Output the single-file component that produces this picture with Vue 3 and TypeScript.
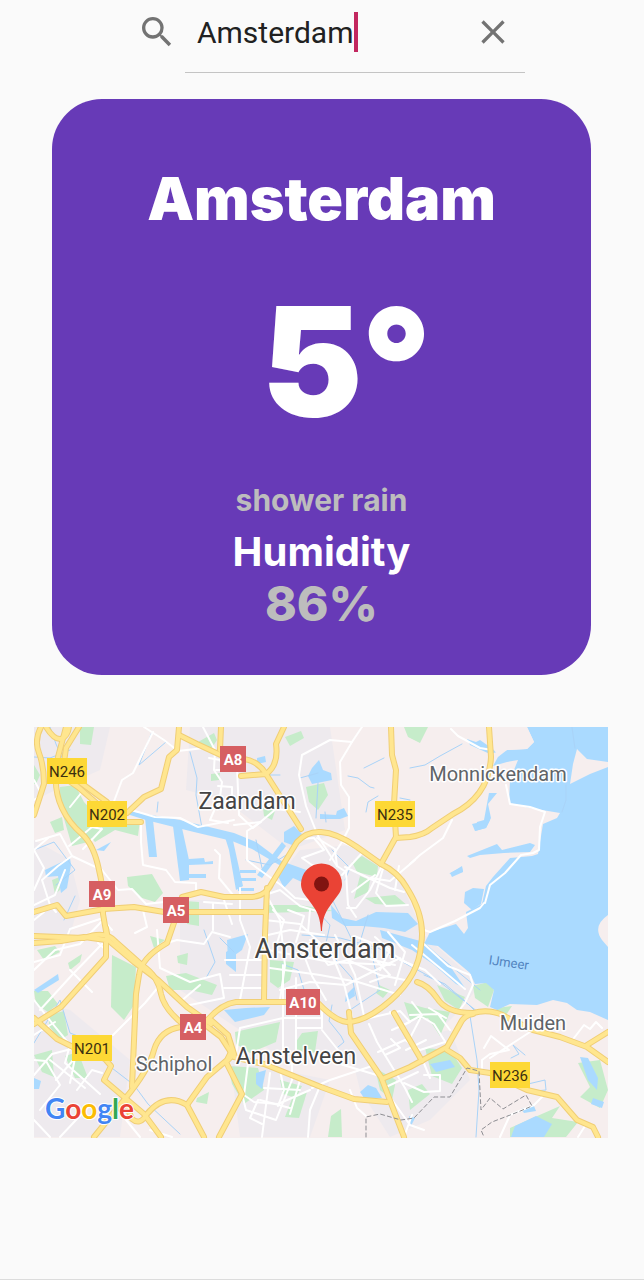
<script setup lang="ts">
import { ref } from 'vue'

interface Shield {
  code: string
  x: number
  y: number
  w: number
  kind: 'national' | 'motorway'
}

interface Place {
  name: string
  x: number
  y: number
  size: 'lg' | 'md' | 'sm'
}

const query = ref('Amsterdam')
const weather = {
  city: 'Amsterdam',
  temperature: 5,
  description: 'shower rain',
  humidity: 86,
}

function clearQuery(): void {
  query.value = ''
}

const shields: Shield[] = [
  { code: 'N246', x: 67, y: 771, w: 40, kind: 'national' },
  { code: 'N202', x: 107, y: 814, w: 40, kind: 'national' },
  { code: 'N235', x: 395, y: 814, w: 40, kind: 'national' },
  { code: 'N201', x: 92, y: 1048, w: 40, kind: 'national' },
  { code: 'N236', x: 510, y: 1075, w: 40, kind: 'national' },
  { code: 'A8', x: 233, y: 759, w: 26, kind: 'motorway' },
  { code: 'A9', x: 102, y: 894, w: 26, kind: 'motorway' },
  { code: 'A5', x: 176, y: 910, w: 26, kind: 'motorway' },
  { code: 'A10', x: 303, y: 1002, w: 34, kind: 'motorway' },
  { code: 'A4', x: 193, y: 1027, w: 26, kind: 'motorway' },
]

const places: Place[] = [
  { name: 'Amsterdam', x: 325, y: 958, size: 'lg' },
  { name: 'Zaandam', x: 247, y: 809, size: 'md' },
  { name: 'Amstelveen', x: 296, y: 1064, size: 'md' },
  { name: 'Monnickendam', x: 498, y: 781, size: 'sm' },
  { name: 'Muiden', x: 533, y: 1030, size: 'sm' },
  { name: 'Schiphol', x: 174, y: 1071, size: 'sm' },
]

const urban: string[] = [
  'M34 727H110L100 770L34 800Z',
  'M190 727H330L345 830L290 850L225 800L186 790Z',
  'M34 840L70 860L80 900L70 935L34 950Z',
  'M180 900H260L300 850L350 845L400 880L424 935L480 985L460 1010L420 1050L400 1090L340 1050L270 1050L180 990Z',
  'M34 1000L70 1010L130 1060L120 1137H34Z',
  'M230 1060L330 1080L310 1137H240Z',
  'M350 1050L450 1030L470 1080L430 1120L390 1137L360 1090Z',
]

const parks: string[] = [
  'M80 727H94L91 745L80 744Z',
  'M60 787L75 785L84 802L104 824L88 842L72 846L60 805Z',
  'M88 834L105 826L140 820L138 836L115 830L95 842Z',
  'M34 765L40 775L36 784H34Z',
  'M50 822L62 817L64 830L55 833Z',
  'M127 877L152 874L163 893L155 902L142 898L128 886Z',
  'M52 880L62 876L60 890L55 894Z',
  'M198 742L214 733L217 740L210 751L198 747Z',
  'M211 774L220 773L219 780L211 781Z',
  'M285 737L301 731L304 738L290 746Z',
  'M306 787L324 783L328 795L318 810L309 802Z',
  'M263 808L276 808L272 820L264 816Z',
  'M404 727H428L420 743L408 737Z',
  'M352 862L362 856L378 866L377 877L357 872Z',
  'M360 876L370 880L368 892L354 899Z',
  'M365 898L395 895L408 906L375 904Z',
  'M268 905L300 905L335 911L300 912L264 913Z',
  'M185 901L199 902L199 926L187 924Z',
  'M270 960L294 962L290 980L278 988L270 982Z',
  'M379 985L390 990L383 998L376 993Z',
  'M112 955L136 967L134 1005L124 1020L111 1007Z',
  'M150 936L165 940L154 948Z',
  'M177 956L188 953L187 965L178 963Z',
  'M166 976L186 973L217 985L212 995L190 990L170 990Z',
  'M37 950L55 946L60 952L44 960Z',
  'M68 963L82 954L80 962L70 970Z',
  'M34 991L48 991L58 1004L48 1012L36 1004Z',
  'M49 1015L64 1011L68 1035L60 1040L49 1026Z',
  'M34 1055L52 1050L54 1077L42 1072Z',
  'M65 1056L78 1052L88 1078L75 1078Z',
  'M235 1032L280 1022L276 1042L250 1053L236 1044Z',
  'M302 1033L318 1031L315 1052L297 1060L295 1043Z',
  'M228 1066L258 1068L264 1090L244 1104L232 1084Z',
  'M280 1080L302 1086L296 1098L283 1094Z',
  'M293 1096L307 1092L299 1118L285 1117Z',
  'M331 1116L341 1109L342 1137H328Z',
  'M197 1098L209 1092L207 1104L196 1102Z',
  'M425 1048L450 1050L462 1068L452 1084L432 1076Z',
  'M408 1090L422 1084L430 1094L410 1110Z',
  'M473 986L488 982L494 990L488 1007L475 998Z',
  'M404 1002L425 1008L450 1012L440 1036L428 1018L410 1020Z',
  'M437 985L465 997L459 1010L445 1001Z',
  'M497 1008L512 1006L506 1015L497 1014Z',
  'M578 1063L600 1060L608 1090L600 1108L580 1097L590 1087Z',
  'M375 1068L396 1080L392 1100L380 1090Z',
  'M510 1128L560 1106L552 1118L578 1122L566 1137H510Z',
]

const lakes: string[] = [
  'M527 727L534 742L527 749L507 750L498 757L493 766L507 762L518 760L510 780L509 803L530 808L560 813L557 818L543 824L538 854L532 856L510 858L493 877L486 886L482 904L466 912L468 928L464 934L456 924L430 932L424 944L438 946L470 973L475 984L486 983L494 990L490 1007L497 1010L510 1004L537 1005L553 1000L567 1003L577 1010L590 1012L608 1020V727Z',
  'M467 739L476 742L480 740L497 752L490 754L470 745Z',
  'M465 892L473 888L484 889L481 904L472 910L464 903Z',
  'M450 873L462 867L463 872L452 877Z',
  'M128 811L180 820L234 833L256 842L280 860L300 870L297 875L274 862L252 849L232 841L194 832L146 820L130 815Z',
  'M145 818L153 820L157 857L149 857Z',
  'M173 826L182 828L189 860V880L180 881Z',
  'M189 859L204 858L205 862L213 861V864L189 865Z',
  'M189 874H206V878H189Z',
  'M224 834L232 836L243 886L236 890L229 850Z',
  'M240 870H256V873H240ZM240 878H256V881H240ZM238 888H254V891H238Z',
  'M284 832L294 826L302 834L292 845L284 842Z',
  'M284 862L312 872L306 884L293 878L284 888L278 876Z',
  'M282 842L286 846L262 878L257 875Z',
  'M312 768L319 760L323 770L331 773L332 780L312 784L308 776Z',
  'M257 758L265 756L266 762L257 764Z',
  'M331 905L342 918L356 921L376 912L408 913L418 924L405 932L384 928L362 926L345 926L332 918Z',
  'M380 930L424 942L450 966L465 988L456 984L433 964L412 950L382 938Z',
  'M45 870L70 858L71 865L67 888L61 893L58 876L46 877Z',
  'M96 850L111 842L104 851Z',
  'M320 814L336 815L337 811L344 808L348 816L340 819H320Z',
  'M477 822L484 820L489 793L497 793L488 804L491 818L486 828L475 831Z',
  'M449 874L462 866L463 872Z',
  'M472 824L490 820L486 828L475 831Z',
  'M467 856L482 850L497 844L502 850L530 843L535 845L530 852L504 853L480 855L470 858Z',
  'M227 940L248 934L242 950L228 960Z',
  'M224 1010L246 1008L270 1007L264 1015L235 1022Z',
  'M256 1073L266 1070L262 1089L256 1084Z',
  'M360 1092L368 1085L376 1088L382 1098L364 1098Z',
  'M430 1064L450 1060L455 1067L436 1072Z',
  'M580 1057L588 1058L598 1078L597 1090L588 1080Z',
  'M515 1126L536 1116L552 1124L544 1137H511Z',
  'M593 1098L604 1102L602 1108L591 1104Z',
  'M226 952L236 946V972L226 964Z',
  'M34 990L58 974L59 980L38 993Z',
  'M346 995L354 987L355 996L345 1002Z',
  'M34 1078L41 1081L39 1089H34Z',
  'M409 1116L415 1118L411 1126Z',
  'M521 1109L534 1106L536 1111L524 1113Z',
]

const streams: string[] = [
  'M34 757L50 758L70 750M50 727L56 744L64 762M152 732L139 765L166 742',
  'M190 752L197 778L196 795L202 828M158 802L157 812',
  'M410 768L425 765L440 756L462 744M348 776L358 778L370 787L374 788M364 768L384 758',
  'M572 727L575 748M566 785V800L562 812',
  'M332 1005L329 1021L341 1036L344 1042L338 1047',
  'M470 1016L477 1060L479 1090L476 1137',
  'M525 1055L513 1045L519 1054L511 1058M528 1084L545 1080L546 1090L534 1091',
  'M34 1043L60 1000L70 1033L88 1040L108 1065L134 1085L148 1104L180 1134',
  'M330 895L340 915L352 940L372 955L380 990L350 1010',
  'M302 935L340 938L378 948L410 966L440 982L478 1012',
  'M318 912L330 925L326 943M368 915L360 942L374 950',
  'M424 975L445 984L466 1002L478 1014M440 957L480 990',
  'M246 860L270 865L296 849M256 840L262 868',
  'M282 964L298 970L306 996M336 960L352 978L357 1000',
  'M204 930L215 962L206 978M220 938L234 952',
  'M34 850L54 842L75 870L56 885M75 896L64 920',
  'M318 783L316 818M300 778L318 773M325 812L326 822M332 850L350 868L345 880',
  'M240 775H280M366 812L368 802L378 796M400 798L410 800',
]

const streets: string[] = [
  'M144 727L164 740L178 751L204 748M153 732L133 773L122 780L113 804',
  'M128 809L155 817L180 818L198 827L234 820',
  'M141 824V842L143 865L166 870L175 882L196 883V893L183 899',
  'M215 850L220 855L219 878L233 895M203 727L215 750L214 770L222 782L220 797L210 820L228 823',
  'M72 856L58 866L42 880L50 905L56 912M36 841L60 834L72 856L102 870L118 890L132 889L146 904L164 902',
  'M83 849L102 829L92 827L74 842L69 846M34 800L42 795L34 780M48 838L34 850L44 868L34 890',
  'M70 807L82 792M34 920L44 912M103 918L70 929L60 955L34 962',
  'M230 764L237 767L239 815L253 828L276 809L300 812',
  'M218 786L232 787V795L224 805M216 770L232 770M209 758L220 760L224 769',
  'M299 775L302 755L330 740L352 742L362 727M299 775L306 806L318 836L337 866L346 872L348 905L356 917',
  'M352 742L340 762L341 785L349 797V828L342 842L330 860',
  'M234 825L261 822L247 831V860L257 868L281 885L295 898L310 900',
  'M301 839L314 838L324 850L302 858L312 865L328 870M317 838L335 849L337 866',
  'M385 860L370 890L356 908L347 908M371 878L390 881L415 860M399 866L395 890M384 865L376 893L386 906L408 905',
  'M343 842L363 852L342 875M345 867L390 888L404 892M352 892L375 875',
  'M410 864L420 855L443 838L452 820M485 903L490 885L505 873L521 855L533 853L539 850L540 827L545 812L530 807L510 804L506 785',
  'M424 930L430 932L455 921L480 908L484 903M451 729L458 736L480 748L492 750',
  'M34 905L55 895L65 870M40 1010L72 975L102 944M70 970L92 992M98 943L106 950',
  'M113 1035L145 1003L160 985M112 930L103 920L80 944L55 950L34 970',
  'M143 910L147 927L135 933M204 902L232 904M213 903V930M224 900L232 924',
  'M157 930L160 968L190 982L220 974L224 998L190 1005M180 1002L200 985M160 945L177 940L204 944L212 932L230 937',
  'M240 888L240 920L250 947L240 1000M225 960H262M230 975H264M224 988H262M265 920L300 924L322 945',
  'M268 898L280 920L285 965L280 1000M268 935L290 930L324 935M268 950L330 962L390 965',
  'M283 965V1055M296 978V1052M284 1018H320M296 1028H322V1010M236 1054L240 1028L283 1018',
  'M270 968L320 975L358 982L400 995M280 990L310 982L346 985L400 958',
  'M302 950L312 976L326 1000M330 950L344 984L352 1016M344 952L355 975L364 1016',
  'M310 940L328 965L360 957L395 965M335 935L348 960L380 975L405 980M362 945L390 975L370 982',
  'M375 937L390 950L380 970M388 932L405 952L395 985M354 936L380 946L412 966',
  'M265 895L280 890L300 906L320 912M273 910L284 920L275 950M288 910L304 916L296 942M310 910L308 932',
  'M400 960L425 970L440 984M424 944L448 966L470 975L473 985L465 1003L458 1012M412 945L440 968L465 989',
  'M369 1024L377 1042L405 1088L412 1102M378 1052L405 1040L420 1050L445 1042M365 1019L400 1011L410 1022L392 1030',
  'M391 1039L400 1048L385 1055M400 1027L420 1016L434 1024L446 1043M412 1002L422 1015L410 1038L423 1061L430 1078',
  'M424 1075L440 1075V1091L424 1092L404 1083M406 1050L426 1040M386 1087L418 1072',
  'M410 1015L438 1014L450 1030M429 1008L446 1018M390 1012L405 1030',
  'M484 1048L491 1036L509 1050L490 1054L482 1060V1068M530 1032L510 1045L490 1058M574 1038L584 1025L590 1029L596 1022L602 1028',
  'M34 1000L52 1023L70 1045L65 1063L90 1085L100 1094M50 1060L85 1088M34 1075L52 1054L75 1048M56 1080L75 1058L70 1083',
  'M34 1035L55 1022M40 1110L60 1085L46 1061L34 1060M77 1090L92 1070L102 1073M34 1120L50 1137',
  'M248 1064L244 1095L254 1102L278 1104L310 1090M270 1073L262 1137M292 1056V1080L276 1120L246 1110L242 1094M300 1080L290 1114',
  'M264 1088L300 1090M260 1100L290 1108M312 1088L330 1080L375 1065M320 1086L310 1110L308 1137',
  'M258 1100L250 1118L262 1124M280 1070L284 1090L278 1106M350 1090L357 1108L366 1116',
  'M404 1137L412 1115M390 1097L410 1125L424 1130M500 1137L510 1115L534 1105L544 1095M578 1137L585 1126',
  'M90 1105L60 1137M118 1110L140 1137M150 1130L172 1137M300 1052L380 1076M322 1030L342 1055',
]

const highways: string[] = [
  'M41 727Q34 740 39 753T44 784L34 815',
  'M46 727Q54 740 61 739Q68 736 69 727',
  'M66 727L58 757Q52 787 62 808Q69 823 82 834Q94 845 99 870Q104 890 103 914L107 937',
  'M79 727L66 748L62 776L78 787L101 807L117 822H141',
  'M77 780L107 802',
  'M179 727L177 750L169 757L161 789L144 797L127 813',
  'M179 735L197 744L225 757',
  'M221 727L220 750',
  'M34 912L57 905L66 916L104 909L134 907L164 912H266',
  'M182 897L201 892L224 897H252Q266 896 272 883L297 842Q307 831 321 832Q337 833 357 847L381 864Q398 872 407 888Q426 918 421 945Q419 975 391 1000Q366 1022 347 1022Q335 1021 317 1002L261 1002H236Q220 1004 204 1024',
  'M34 936L84 938Q106 930 116 942L143 966Q158 976 161 994Q164 1009 184 1025L204 1024L221 1037L234 1057L250 1061L264 1064L321 1087L354 1099L387 1102',
  'M106 928L108 940L134 962L158 980L187 1007L211 1024',
  'M177 914L167 943Q141 958 139 975L136 994L132 1087',
  'M34 943L61 941L84 937L106 940V957L61 1007L34 1024',
  'M34 1018L57 1039L77 1049L105 1059L111 1066L104 1080L144 1114L161 1137',
  'M181 1027Q160 1030 154 1050Q149 1070 124 1100L94 1137',
  'M124 1100L132 1119Q140 1126 147 1114Q165 1092 187 1105L207 1077L227 1060L232 1050',
  'M187 1105L204 1137',
  'M211 1020L228 1035L234 1054L226 1062L242 1094L219 1137',
  'M267 888L265 935L264 1000',
  'M349 1012L351 1033L381 1077L404 1137',
  'M382 1079L410 1067L447 1047L460 1024Q464 1015 473 1014',
  'M394 1013L422 1061',
  'M417 982Q428 985 437 998Q446 1013 473 1013Q492 1008 508 1018L533 1030L560 1037L587 1047L608 1062',
  'M587 1045L608 1032',
  'M447 1050L460 1058L470 1070L490 1073L527 1090L557 1097L577 1120L593 1127L598 1137',
  'M391 727L392 755L396 770L394 804L396 837L381 864',
  'M396 838L410 837Q424 835 432 828L453 814Q489 796 491 757L489 727',
  'M284 727L276 744Q279 765 266 774',
  'M241 776L266 774M244 759Q258 761 266 774L287 807L301 829',
]

const borders: string[] = [
  'M366 1137V1117L380 1114L401 1120L414 1118L434 1097L450 1097L467 1068L479 1071L481 1110L490 1098L503 1109L526 1095L532 1106L518 1112L492 1122L481 1130L484 1137',
]
</script>

<template>
  <main class="page">
    <form class="search" role="search" @submit.prevent>
      <button class="icon-button" type="submit" aria-label="Search">
        <svg class="icon" viewBox="0 0 24 24" aria-hidden="true">
          <path
            d="M15.5 14h-.79l-.28-.27A6.471 6.471 0 0 0 16 9.500 6.500 6.500 0 1 0 9.500 16c1.610 0 3.090-.59 4.230-1.570l.27.28v.79l5 4.990L20.490 19l-4.990-5zm-6 0C7.010 14 5 11.990 5 9.500S7.010 5 9.500 5 14 7.010 14 9.500 11.990 14 9.500 14z"
          />
        </svg>
      </button>
      <div class="field">
        <div class="entry">
          <input v-model="query" class="input" type="text" autocomplete="off" aria-label="City" />
          <span class="caret"></span>
        </div>
        <button class="icon-button" type="button" aria-label="Clear" @click="clearQuery">
          <svg class="icon" viewBox="0 0 24 24" aria-hidden="true">
            <path
              d="M19 6.410 17.590 5 12 10.590 6.410 5 5 6.410 10.590 12 5 17.590 6.410 19 12 13.410 17.590 19 19 17.590 13.410 12z"
            />
          </svg>
        </button>
      </div>
    </form>

    <section class="card">
      <h1 class="city">{{ weather.city }}</h1>
      <p class="temperature">{{ weather.temperature }}°</p>
      <p class="description">{{ weather.description }}</p>
      <h2 class="humidity-title">Humidity</h2>
      <p class="humidity">{{ weather.humidity }}%</p>
    </section>

    <svg class="map" viewBox="34 727 574 411" role="img" aria-label="Map of Amsterdam">
      <rect class="land" x="34" y="727" width="574" height="411" />
      <path v-for="d in urban" :key="d" class="urban" :d="d" />
      <path v-for="d in parks" :key="d" class="park" :d="d" />
      <path v-for="d in lakes" :key="d" class="lake" :d="d" />
      <path
        class="land"
        d="M577 749L587 759L608 762V767L590 774L570 784L573 764ZM608 915Q592 926 602 940L608 947ZM480 732L492 727H527L534 742L527 749L507 750L497 754Z"
      />
      <path v-for="d in streams" :key="d" class="stream" :d="d" />
      <path v-for="d in streets" :key="d" class="street" :d="d" />
      <path v-for="d in highways" :key="'c' + d" class="highway-casing" :d="d" />
      <path v-for="d in highways" :key="'f' + d" class="highway" :d="d" />
      <path v-for="d in borders" :key="d" class="border" :d="d" />

      <g v-for="s in shields" :key="s.code">
        <rect
          :class="['shield', s.kind]"
          :x="s.x - s.w / 2"
          :y="s.y - 13"
          :width="s.w"
          height="26"
        />
        <text :class="['shield-text', s.kind]" :x="s.x" :y="s.y + 6">{{ s.code }}</text>
      </g>

      <text v-for="p in places" :key="p.name" :class="['place', p.size]" :x="p.x" :y="p.y">
        {{ p.name }}
      </text>
      <text class="water-name" x="509" y="967" transform="rotate(8 509 961)">IJmeer</text>

      <path
        class="pin"
        d="M321 931C320 913 315 909 308 899C303 893 301 889 301 884A20.500 20.500 0 0 1 342 884C342 889 340 893 335 899C328 909 323 913 322 931Z"
      />
      <circle class="pin-dot" cx="321.500" cy="884" r="7.500" />

      <text class="google" x="45" y="1119">
        <tspan class="blue">G</tspan><tspan class="red">o</tspan><tspan class="yellow">o</tspan><tspan class="blue">g</tspan><tspan class="green">l</tspan><tspan class="red">e</tspan>
      </text>
    </svg>
  </main>
</template>

<style>
body {
  margin: 0;
  background: #fafafa;
}
</style>

<style scoped>
.page {
  box-sizing: border-box;
  display: flex;
  flex-direction: column;
  min-height: 100vh;
  padding: 0 36px 0 34px;
  border-bottom: 1px solid #dcdcdc;
  background: #fafafa;
  font-family: Roboto, "Liberation Sans", sans-serif;
}

.search {
  display: flex;
  align-self: center;
  width: 69%;
  max-width: 520px;
  height: 73px;
  margin-left: 12px;
}

.icon-button {
  display: flex;
  flex: none;
  align-items: center;
  justify-content: center;
  width: 56px;
  height: 63px;
  padding: 0;
  border: 0;
  background: none;
}

.icon {
  width: 40px;
  height: 40px;
  fill: #737373;
}

.field {
  display: flex;
  flex: 1;
  min-width: 0;
  justify-content: space-between;
  padding: 0 4px 0 12px;
  border-bottom: 1px solid #c4c4c4;
}

.entry {
  display: flex;
  align-items: center;
  min-width: 0;
  height: 63px;
}

.input {
  field-sizing: content;
  min-width: 0;
  padding: 2px 0 0;
  border: 0;
  outline: 0;
  background: none;
  color: #212121;
  font: 400 30px/40px Roboto, "Liberation Sans", sans-serif;
}

.caret {
  flex: none;
  width: 4px;
  height: 40px;
  background: #c2275f;
}

.card {
  display: flex;
  flex-direction: column;
  align-items: center;
  margin: 26px 17px 52px 18px;
  padding: 64px 24px 44px;
  border-radius: 50px;
  background: #673ab7;
  color: #fff;
  font-family: Inter, "Open Sans", sans-serif;
  text-align: center;
}

.city,
.temperature,
.description,
.humidity-title,
.humidity {
  margin: 0;
}

.city {
  font-size: 59px;
  font-weight: 900;
  line-height: 72px;
}

.temperature {
  margin-top: 37px;
  padding-left: 50px;
  font-size: 152px;
  font-weight: 900;
  line-height: 180px;
}

.description {
  margin-top: 28px;
  color: #bdbdbd;
  font-size: 30px;
  font-weight: 700;
  line-height: 40px;
}

.humidity-title {
  margin-top: 8px;
  font-size: 40px;
  font-weight: 700;
  line-height: 48px;
}

.humidity {
  color: #bdbdbd;
  font-size: 48px;
  font-weight: 800;
  line-height: 55px;
}

.map {
  display: block;
  width: 100%;
  height: auto;
}

.land {
  fill: #f6eeee;
}

.urban {
  fill: #eeeaee;
}

.park {
  fill: #c6ecca;
}

.lake {
  fill: #aadaff;
}

.stream,
.street,
.highway,
.highway-casing,
.border {
  fill: none;
  stroke-linecap: round;
  stroke-linejoin: round;
}

.stream {
  stroke: #a9d3f8;
  stroke-width: 1px;
}

.street {
  stroke: #fff;
  stroke-width: 2px;
}

.highway-casing {
  stroke: #f0ce76;
  stroke-width: 6px;
}

.highway {
  stroke: #ffe68f;
  stroke-width: 4px;
}

.border {
  stroke: #8d8d92;
  stroke-width: 1px;
  stroke-dasharray: 4 3;
}

.shield.national {
  fill: #fdd835;
}

.shield.motorway {
  fill: #d65f62;
}

.shield-text {
  font-size: 15px;
  text-anchor: middle;
}

.shield-text.national {
  fill: #3c2f10;
}

.shield-text.motorway {
  fill: #fff;
  font-weight: 700;
}

.place {
  fill: #444;
  stroke: #fff;
  stroke-linejoin: round;
  stroke-width: 3px;
  paint-order: stroke;
  text-anchor: middle;
}

.place.lg {
  font-size: 27px;
}

.place.md {
  font-size: 23px;
}

.place.sm {
  fill: #606468;
  font-size: 20px;
}

.water-name {
  fill: #5284c0;
  font-size: 13px;
  text-anchor: middle;
}

.pin {
  fill: #ea4335;
}

.pin-dot {
  fill: #811411;
}

.google {
  font-family: Lato, "Open Sans", sans-serif;
  font-size: 28px;
  font-weight: 700;
  stroke: #fff;
  stroke-width: 2px;
  paint-order: stroke;
}

.blue {
  fill: #4285f4;
}

.red {
  fill: #ea4335;
}

.yellow {
  fill: #fbbc05;
}

.green {
  fill: #34a853;
}
</style>
